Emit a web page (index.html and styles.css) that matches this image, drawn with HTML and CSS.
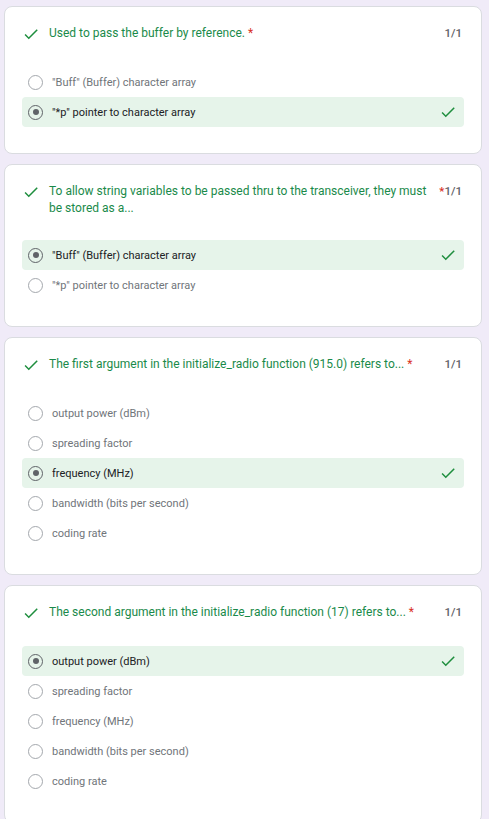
FILE: index.html
```html
<!DOCTYPE html>
<html lang="en">
<head>
<meta charset="utf-8">
<title>Quiz results</title>
<link rel="stylesheet" href="styles.css">
</head>
<body>
<div class="page">

  <div class="card">
    <div class="q-head">
      <svg class="q-check" viewBox="0 0 24 24"><path d="M9 16.17L4.83 12l-1.42 1.41L9 19 21 7l-1.41-1.41z"/></svg>
      <div class="q-title">Used to pass the buffer by reference. <span class="req">*</span></div>
      <div class="q-points">1/1</div>
    </div>
    <div class="options">
      <div class="opt"><span class="radio"></span><span class="opt-label">"Buff" (Buffer) character array</span></div>
      <div class="opt opt-correct"><span class="radio radio-on"></span><span class="opt-label">"*p" pointer to character array</span><svg class="opt-check" viewBox="0 0 24 24"><path d="M9 16.17L4.83 12l-1.42 1.41L9 19 21 7l-1.41-1.41z"/></svg></div>
    </div>
  </div>

  <div class="card">
    <div class="q-head">
      <svg class="q-check" viewBox="0 0 24 24"><path d="M9 16.17L4.83 12l-1.42 1.41L9 19 21 7l-1.41-1.41z"/></svg>
      <div class="q-title">To allow string variables to be passed thru to the transceiver, they must be stored as a...</div>
      <div class="q-points"><span class="req">*</span>1/1</div>
    </div>
    <div class="options">
      <div class="opt opt-correct"><span class="radio radio-on"></span><span class="opt-label">"Buff" (Buffer) character array</span><svg class="opt-check" viewBox="0 0 24 24"><path d="M9 16.17L4.83 12l-1.42 1.41L9 19 21 7l-1.41-1.41z"/></svg></div>
      <div class="opt"><span class="radio"></span><span class="opt-label">"*p" pointer to character array</span></div>
    </div>
  </div>

  <div class="card">
    <div class="q-head">
      <svg class="q-check" viewBox="0 0 24 24"><path d="M9 16.17L4.83 12l-1.42 1.41L9 19 21 7l-1.41-1.41z"/></svg>
      <div class="q-title">The first argument in the initialize_radio function (915.0) refers to... <span class="req">*</span></div>
      <div class="q-points">1/1</div>
    </div>
    <div class="options">
      <div class="opt"><span class="radio"></span><span class="opt-label">output power (dBm)</span></div>
      <div class="opt"><span class="radio"></span><span class="opt-label">spreading factor</span></div>
      <div class="opt opt-correct"><span class="radio radio-on"></span><span class="opt-label">frequency (MHz)</span><svg class="opt-check" viewBox="0 0 24 24"><path d="M9 16.17L4.83 12l-1.42 1.41L9 19 21 7l-1.41-1.41z"/></svg></div>
      <div class="opt"><span class="radio"></span><span class="opt-label">bandwidth (bits per second)</span></div>
      <div class="opt"><span class="radio"></span><span class="opt-label">coding rate</span></div>
    </div>
  </div>

  <div class="card">
    <div class="q-head">
      <svg class="q-check" viewBox="0 0 24 24"><path d="M9 16.17L4.83 12l-1.42 1.41L9 19 21 7l-1.41-1.41z"/></svg>
      <div class="q-title">The second argument in the initialize_radio function (17) refers to... <span class="req">*</span></div>
      <div class="q-points">1/1</div>
    </div>
    <div class="options">
      <div class="opt opt-correct"><span class="radio radio-on"></span><span class="opt-label">output power (dBm)</span><svg class="opt-check" viewBox="0 0 24 24"><path d="M9 16.17L4.83 12l-1.42 1.41L9 19 21 7l-1.41-1.41z"/></svg></div>
      <div class="opt"><span class="radio"></span><span class="opt-label">spreading factor</span></div>
      <div class="opt"><span class="radio"></span><span class="opt-label">frequency (MHz)</span></div>
      <div class="opt"><span class="radio"></span><span class="opt-label">bandwidth (bits per second)</span></div>
      <div class="opt"><span class="radio"></span><span class="opt-label">coding rate</span></div>
    </div>
  </div>

</div>
</body>
</html>
```

FILE: styles.css
```css
html, body {
  margin: 0;
  padding: 0;
  background: #f0ebf8;
  font-family: Roboto, "Liberation Sans", Arial, sans-serif;
  -webkit-font-smoothing: antialiased;
}

.page {
  display: flex;
  flex-direction: column;
  gap: 10px;
  padding: 6px 0 0 4px;
}

.card {
  width: 478px;
  box-sizing: border-box;
  background: #ffffff;
  border: 1px solid #dadce0;
  border-radius: 8px;
  padding: 18px 17px 26px 17px;
}

.q-head {
  display: flex;
  align-items: flex-start;
  padding-right: 2px;
}

.q-check {
  width: 18px;
  height: 18px;
  flex: none;
  fill: #1e8e3e;
  margin-right: 9px;
}

.q-title {
  flex: 1;
  font-size: 12px;
  line-height: 16.5px;
  color: #1a8a4a;
}

.req {
  color: #d93025;
}

.q-points {
  flex: none;
  margin-left: 10px;
  font-size: 11.5px;
  line-height: 16.5px;
  font-weight: 500;
  color: #5f6368;
}

.options {
  margin-top: 24px;
  display: flex;
  flex-direction: column;
}

.opt {
  display: flex;
  align-items: center;
  height: 30px;
  padding: 0 7px 0 6px;
  border-radius: 4px;
}

.opt-correct {
  background: #e6f4ea;
}

.radio {
  width: 15px;
  height: 15px;
  box-sizing: border-box;
  border: 1.5px solid #a4a8ad;
  border-radius: 50%;
  flex: none;
  display: flex;
  align-items: center;
  justify-content: center;
  margin-right: 9px;
}

.radio-on {
  border-color: #5f6368;
}

.radio-on::after {
  content: "";
  width: 6px;
  height: 6px;
  border-radius: 50%;
  background: #5f6368;
}

.opt-label {
  flex: 1;
  font-size: 11px;
  color: #70757a;
}

.opt-correct .opt-label {
  color: #202124;
}

.opt-check {
  width: 18px;
  height: 18px;
  flex: none;
  fill: #1e8e3e;
}
```
